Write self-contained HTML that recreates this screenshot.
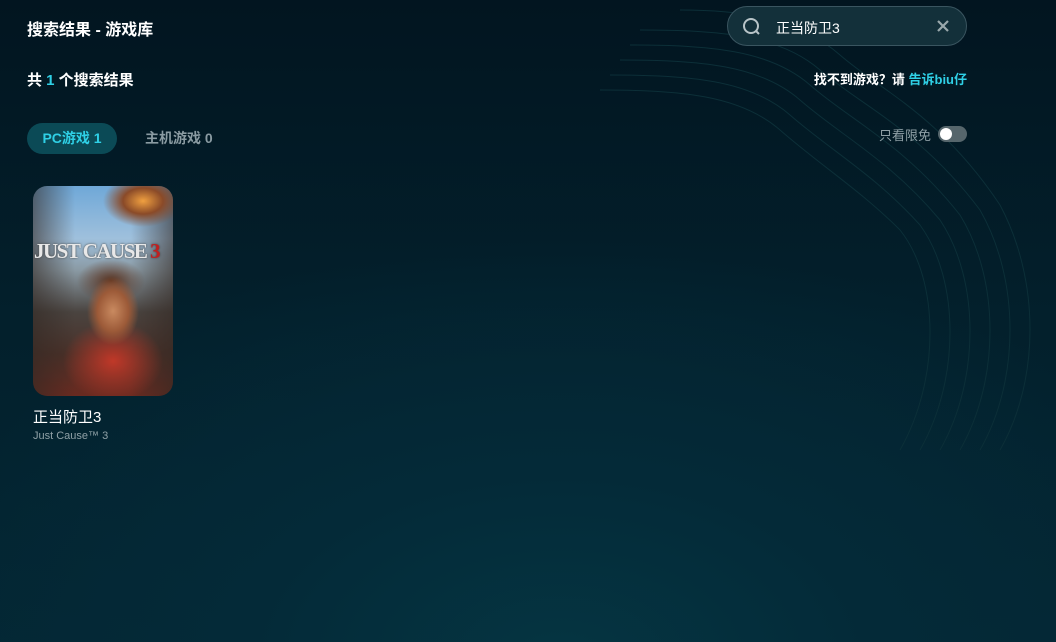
<!DOCTYPE html>
<html><head><meta charset="utf-8"><style>
*{margin:0;padding:0;box-sizing:border-box}
body{width:1056px;height:642px;overflow:hidden;font-family:"Liberation Sans","Noto Sans CJK SC",sans-serif;color:#fff;
background:radial-gradient(ellipse 700px 420px at 560px 660px,#053542 0%,#042a38 45%,rgba(2,26,36,0) 100%),linear-gradient(180deg,#021520 0%,#03202c 50%,#032633 100%);position:relative}
.abs{position:absolute}
.title{left:27px;top:16px;font-size:16px;font-weight:bold}
.count{left:27px;top:69px;font-size:15px;font-weight:bold}
.count b{color:#2fd0e6}
.search{left:727px;top:6px;width:240px;height:40px;border-radius:20px;background:#13303a;border:1px solid #3a5560}
.search .t{position:absolute;left:48px;top:11px;font-size:14px}
.tabs{left:27px;top:123px}
.tab1{position:absolute;left:0;top:0;width:90px;height:31px;border-radius:16px;background:#0b4a56;color:#2fd0e6;font-size:14px;line-height:31px;text-align:center;font-weight:bold}
.tab2{position:absolute;left:118px;top:0;line-height:31px;font-size:14px;color:#8a9ba2;white-space:nowrap;font-weight:bold}
.help{right:89px;top:69px;font-size:13px;white-space:nowrap;font-weight:bold}
.help span{color:#2fd0e6}
.free{left:879px;top:125px;font-size:13px;color:#8fa0a6;white-space:nowrap}
.tog{left:938px;top:126px;width:29px;height:16px;border-radius:8px;background:#56666c}
.tog:after{content:"";position:absolute;left:2px;top:2px;width:12px;height:12px;border-radius:50%;background:#fff}
.card{left:33px;top:186px;width:140px;height:210px;border-radius:14px;overflow:hidden;
background:
radial-gradient(ellipse 26px 34px at 80px 125px,#c98a60 0%,#9c5a38 60%,rgba(0,0,0,0) 100%),
radial-gradient(ellipse 34px 22px at 78px 95px,#5a3320 0%,rgba(0,0,0,0) 100%),
radial-gradient(ellipse 50px 40px at 80px 175px,#c03828 0%,rgba(0,0,0,0) 100%),
radial-gradient(ellipse 40px 26px at 110px 15px,#f0a040 0%,#8a4a28 50%,rgba(0,0,0,0) 100%),
linear-gradient(90deg,rgba(50,40,35,.6) 0%,rgba(0,0,0,0) 30%,rgba(0,0,0,0) 70%,rgba(50,40,35,.6) 100%),
linear-gradient(180deg,#6fa8d8 0%,#9fc0dc 25%,#8a9aa4 40%,#4a4440 60%,#4a3028 80%,#6a2a20 100%)}
.card .jc{position:absolute;left:1px;top:53px;font-size:21px;font-weight:bold;color:#e8e8e8;font-family:"Liberation Serif",serif;letter-spacing:-1.5px;white-space:nowrap;text-shadow:0 0 2px #444}
.card .jc i{color:#c02020;font-style:normal}
.name{left:33px;top:406px;font-size:15px}
.sub{left:33px;top:430px;font-size:11px;color:#8fa0a6}
</style></head><body>
<svg class="abs" style="left:560px;top:0" width="496" height="460" viewBox="0 0 496 460" fill="none" stroke="#0c2f38" stroke-width="1">
<path d="M40 90 C120 90 180 95 220 130 C260 165 300 190 340 230 C380 280 380 380 340 450"/>
<path d="M50 75 C130 75 190 80 230 115 C270 150 315 175 360 225 C400 280 400 380 360 450"/>
<path d="M60 60 C140 60 200 65 240 100 C280 135 330 160 380 220 C420 280 420 380 380 450"/>
<path d="M70 45 C150 45 210 50 250 85 C290 120 345 145 400 215 C440 280 440 380 400 450"/>
<path d="M80 30 C160 30 220 35 260 70 C300 105 360 130 420 210 C460 280 460 380 420 450"/>
<path d="M120 10 C190 10 240 20 280 55 C320 90 380 115 440 205 C480 280 480 380 440 450"/>
</svg>
<div class="abs title">搜索结果 - 游戏库</div>
<div class="abs count">共 <b>1</b> 个搜索结果</div>
<div class="abs search">
<svg style="position:absolute;left:14px;top:10px" width="20" height="20" viewBox="0 0 20 20" fill="none" stroke="#b8c4c8" stroke-width="2"><circle cx="9" cy="9" r="7"/><path d="M14 14l3 3"/></svg>
<div class="t">正当防卫3</div>
<svg style="position:absolute;left:209px;top:13px" width="12" height="12" viewBox="0 0 12 12" stroke="#9aa8ac" stroke-width="2.2"><path d="M1 1l10 10M11 1L1 11"/></svg>
</div>
<div class="abs help">找不到游戏？请 <span>告诉biu仔</span></div>
<div class="abs tabs"><div class="tab1">PC游戏 1</div><div class="tab2">主机游戏 0</div></div>
<div class="abs free">只看限免</div>
<div class="abs tog"></div>
<div class="abs card"><div class="jc">JUST CAUSE <i>3</i></div></div>
<div class="abs name">正当防卫3</div>
<div class="abs sub">Just Cause™ 3</div>
</body></html>
